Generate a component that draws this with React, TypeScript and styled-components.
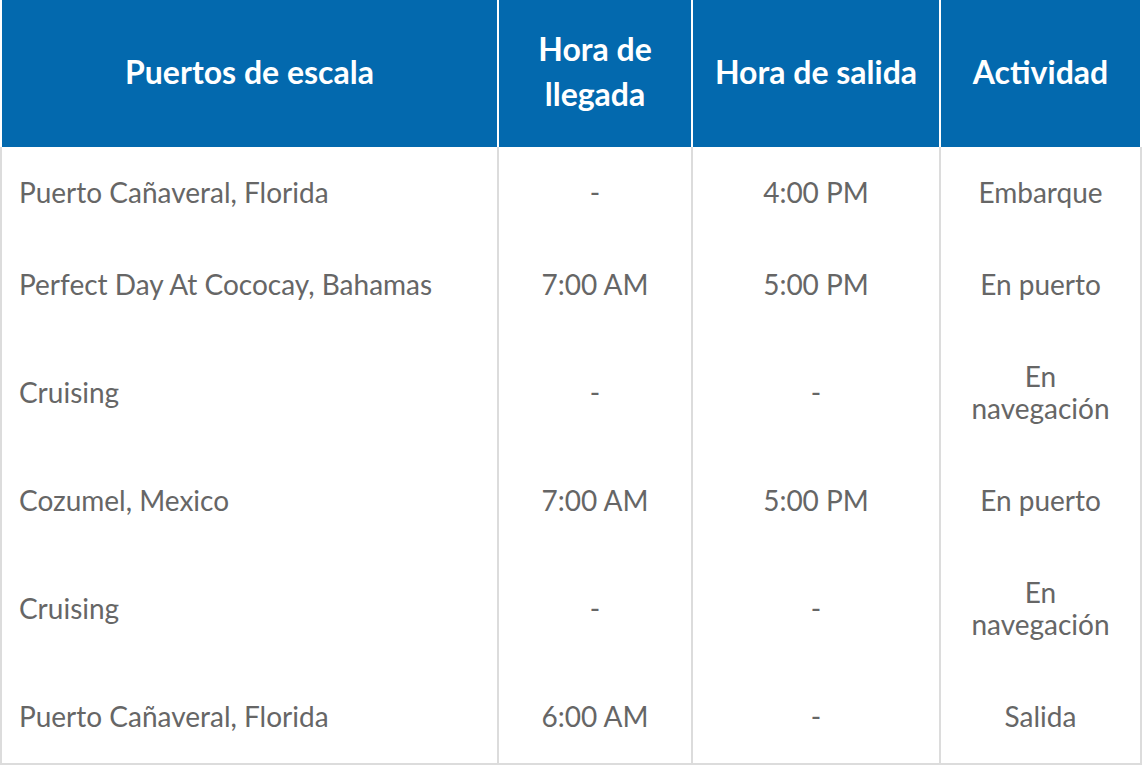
import styled, { createGlobalStyle } from "styled-components";

const GlobalStyle = createGlobalStyle`
  html, body {
    margin: 0;
    padding: 0;
    background: #ffffff;
  }
  body {
    font-family: Lato, "Open Sans", Arial, sans-serif;
  }
`;

const BLUE = "#0369ae";
const LINE = "#dcdcdc";

type Stop = {
  port: string;
  arrival: string;
  departure: string;
  activity: string;
};

const stops: Stop[] = [
  { port: "Puerto Cañaveral, Florida", arrival: "-", departure: "4:00 PM", activity: "Embarque" },
  { port: "Perfect Day At Cococay, Bahamas", arrival: "7:00 AM", departure: "5:00 PM", activity: "En puerto" },
  { port: "Cruising", arrival: "-", departure: "-", activity: "En navegacio\u0301n" },
  { port: "Cozumel, Mexico", arrival: "7:00 AM", departure: "5:00 PM", activity: "En puerto" },
  { port: "Cruising", arrival: "-", departure: "-", activity: "En navegacio\u0301n" },
  { port: "Puerto Cañaveral, Florida", arrival: "6:00 AM", departure: "-", activity: "Salida" },
];

const columns = [
  { label: "Puertos de escala", width: 497 },
  { label: "Hora de llegada", width: 194 },
  { label: "Hora de salida", width: 248 },
  { label: "Actividad", width: 203 },
];

const App = () => {
  return (
    <>
      <GlobalStyle />
      <Table>
        <thead>
          <tr>
            {columns.map((col) => (
              <HeadCell key={col.label} $width={col.width}>
                {col.label === "Hora de llegada" ? (
                  <>
                    Hora de
                    <br />
                    llegada
                  </>
                ) : (
                  col.label
                )}
              </HeadCell>
            ))}
          </tr>
        </thead>
        <tbody>
          {stops.map((stop, i) => (
            <tr key={i}>
              <Cell $align="left">{stop.port}</Cell>
              <Cell>{stop.arrival}</Cell>
              <Cell>{stop.departure}</Cell>
              <Cell $narrow>{stop.activity}</Cell>
            </tr>
          ))}
        </tbody>
      </Table>
    </>
  );
};

const Table = styled.table`
  width: 1142px;
  table-layout: fixed;
  border-collapse: separate;
  border-spacing: 0;
  font-family: Lato, "Open Sans", Arial, sans-serif;

  tbody tr:last-child td {
    border-bottom: 2px solid ${LINE};
  }
`;

const HeadCell = styled.th<{ $width: number }>`
  box-sizing: border-box;
  width: ${(p) => p.$width}px;
  background: ${BLUE};
  color: #ffffff;
  font-size: 32px;
  font-weight: 700;
  line-height: 45px;
  text-align: center;
  vertical-align: middle;
  padding: 26px 10px 31px;
  border-left: 2px solid #ffffff;

  &:last-child {
    border-right: 2px solid #ffffff;
  }
`;

const Cell = styled.td<{ $align?: "left" | "center"; $narrow?: boolean }>`
  box-sizing: border-box;
  color: #666666;
  font-size: 28px;
  font-weight: 400;
  line-height: 32px;
  text-align: ${(p) => p.$align ?? "center"};
  vertical-align: middle;
  padding: 29px ${(p) => (p.$narrow ? "30px" : "17px")} 31px;
  border-left: 2px solid ${LINE};

  &:last-child {
    border-right: 2px solid ${LINE};
  }
`;

export default App;
